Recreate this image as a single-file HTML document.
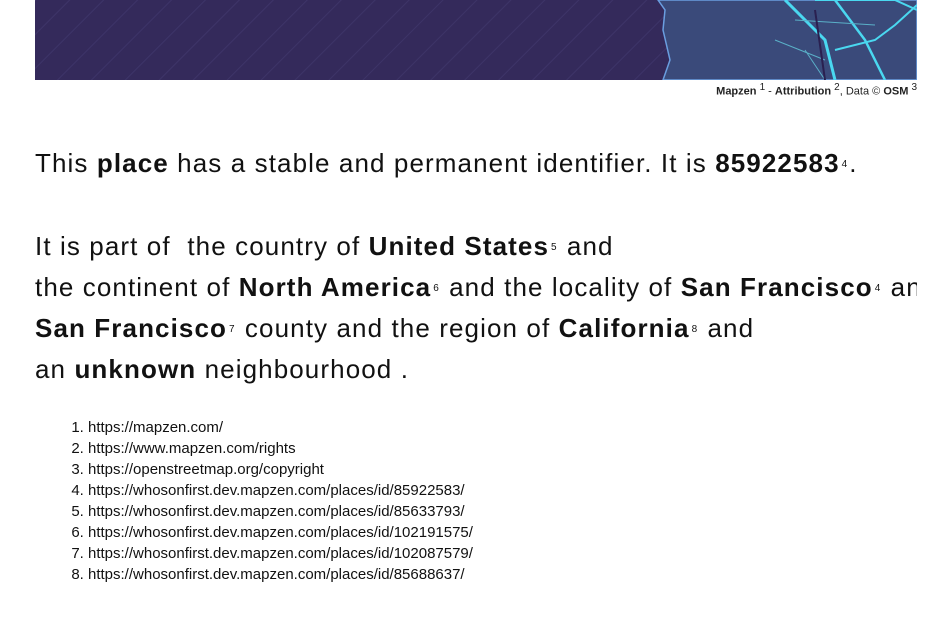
<!DOCTYPE html>
<html><head><meta charset="utf-8"><style>
body{margin:0;background:#fff;width:943px;height:633px;overflow:hidden;font-family:"Liberation Sans",sans-serif;color:#111}
.map{position:absolute;left:35px;top:0;width:882px;height:80px;background:#342a5b;overflow:hidden}
.attr{position:absolute;right:26px;top:82px;font-size:11px;color:#222}
.attr sup{font-size:10px}
.main{position:absolute;left:35px;top:0;width:882px;overflow:hidden;font-size:26px;letter-spacing:1.1px}
.l{position:absolute;left:0;white-space:nowrap;line-height:30px}
.s{font-size:10px;vertical-align:middle;margin:0 2px;letter-spacing:0}
ol{position:absolute;left:52px;top:417px;margin:0;padding-left:36px;font-size:15px;line-height:21px;width:600px}
b{font-weight:bold}
</style></head><body>
<div class="map"><svg width="882" height="80">
<defs><pattern id="p" width="24" height="24" patternUnits="userSpaceOnUse" patternTransform="rotate(45)"><line x1="0" y1="0" x2="0" y2="24" stroke="#3d3468" stroke-width="2"/></pattern></defs>
<rect width="882" height="80" fill="url(#p)"/>
<path d="M623 0 L630 10 L628 30 L635 60 L628 80 L882 80 L882 0 Z" fill="#3a4a7a" stroke="#6a9ee0" stroke-width="1.5"/>
<path d="M750 0 L790 40 L800 80" stroke="#4ad8f0" stroke-width="3" fill="none"/>
<path d="M800 0 L830 40 L850 80" stroke="#4ad8f0" stroke-width="2.5" fill="none"/>
<path d="M800 50 L840 40 L860 25 L882 5" stroke="#4ad8f0" stroke-width="2" fill="none"/>
<path d="M780 0 L860 0 L882 10" stroke="#4ad8f0" stroke-width="2" fill="none"/>
<path d="M740 40 L790 60 M760 20 L840 25 M770 50 L790 80" stroke="#5ab0c8" stroke-width="1" fill="none"/>
<path d="M780 10 L790 80" stroke="#2a2050" stroke-width="2" fill="none"/>
</svg></div>
<div class="attr"><b>Mapzen</b> <sup>1</sup> - <b>Attribution</b> <sup>2</sup>, Data © <b>OSM</b> <sup>3</sup></div>
<div class="main" style="height:400px">
<div class="l" style="top:148px">This <b>place</b> has a stable and permanent identifier. It is <b>85922583</b><span class="s">4</span>.</div>
<div class="l" style="top:231px">It is part of&nbsp; the country of <b>United States</b><span class="s">5</span> and</div>
<div class="l" style="top:272px">the continent of <b>North America</b><span class="s">6</span> and the locality of <b>San Francisco</b><span class="s">4</span> and</div>
<div class="l" style="top:313px"><b>San Francisco</b><span class="s">7</span> county and the region of <b>California</b><span class="s">8</span> and</div>
<div class="l" style="top:354px">an <b>unknown</b> neighbourhood .</div>
</div>
<ol>
<li>https://mapzen.com/</li>
<li>https://www.mapzen.com/rights</li>
<li>https://openstreetmap.org/copyright</li>
<li>https://whosonfirst.dev.mapzen.com/places/id/85922583/</li>
<li>https://whosonfirst.dev.mapzen.com/places/id/85633793/</li>
<li>https://whosonfirst.dev.mapzen.com/places/id/102191575/</li>
<li>https://whosonfirst.dev.mapzen.com/places/id/102087579/</li>
<li>https://whosonfirst.dev.mapzen.com/places/id/85688637/</li>
</ol>
</body></html>
